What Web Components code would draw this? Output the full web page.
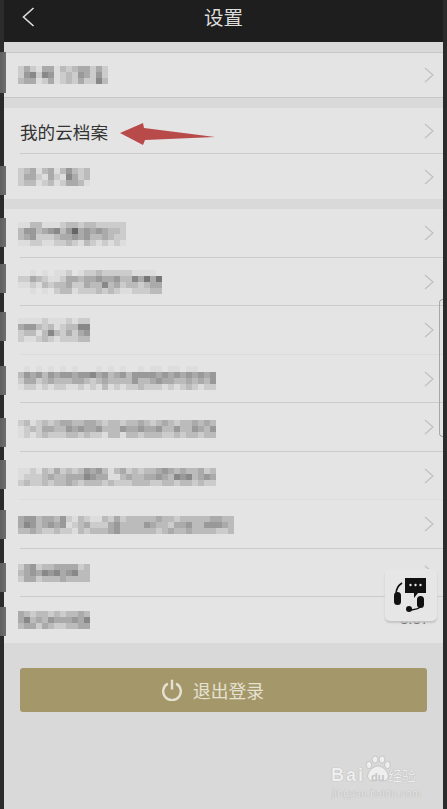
<!DOCTYPE html>
<html lang="zh">
<head>
<meta charset="utf-8">
<title>设置</title>
<style>
  html, body { margin: 0; background: #2b2b2b; }
  body { font-family: "Liberation Sans", "Noto Sans CJK SC", sans-serif; }
</style>
</head>
<body>
<settings-screen>
  <top-bar slot="bar">设置</top-bar>

  <row-group style="--row-h:44px" edged>
    <setting-row mosaic="0" top="13" tab-top="-1" tab-h="41" last></setting-row>
  </row-group>
  <row-group style="--row-h:46px">
    <setting-row><span>我的云档案</span><red-arrow></red-arrow></setting-row>
    <setting-row mosaic="1" top="14" tab-top="12" style="--row-h:45px" last></setting-row>
  </row-group>
  <row-group>
    <setting-row mosaic="2" top="13" tab-top="9"></setting-row>
    <setting-row mosaic="3" top="12" tab-top="6"></setting-row>
    <setting-row mosaic="4" top="12" tab-top="6" faint></setting-row>
    <setting-row mosaic="5" top="11" tab-top="11"></setting-row>
    <setting-row mosaic="6" top="17" tab-top="15"></setting-row>
    <setting-row mosaic="7" top="16" tab-top="8" faint></setting-row>
    <setting-row mosaic="8" top="16" tab-top="10"></setting-row>
    <setting-row mosaic="9" top="15" tab-top="14"></setting-row>
    <setting-row mosaic="10" top="14" tab-top="10" style="--row-h:46px" last no-chevron><span class="ver" slot="end">3.37</span></setting-row>
  </row-group>

  <logout-button>退出登录</logout-button>
  <help-widget></help-widget>
  <scroll-thumb></scroll-thumb>
  <baidu-mark></baidu-mark>
</settings-screen>

<script>
// blurred labels: one string per line, one hex digit per 6px cell (c => #ccc), dot = nothing
const MOSAICS = [
  ['cacdaadbcbaacac', 'c98c89dcbc9ac9c', 'baadcadcbcacc8b'],
  ['cbadbadb9bcb', 'caacdacd8acb', 'cbbdcbdcaabd'],
  ['ddbbdddcbbcbbccccc', 'b99ba98b96a9a9abbc', 'ba9cccbaa9a9bbabcc', 'ddccddccbcdbcdcdcd'],
  ['..d.d.ddc.dccbcccccdddd.', 'ccabcddcaabaa9aa9bb8a7a7', 'ddcdbcbbaccabb8bacbbcbaa', '..d.d.cbbdcccbcbcddcccbb'],
  ['ddddcdddcdcc', 'a99bcbdcbb88', 'cbbdb8bcaca9', 'cddcbcdcccbb'],
  ['.d.d.d.d.d...d.d.d..d.dd.dd.dd...', 'b9a9b9a99a998a9ba9b9999a9a9a9a9a9', 'caacbabbbaabcbabbbb9bba9aabbabab9', 'dccdcdccddcdcdbdcdccbcccdcdcbcdcc'],
  ['cbdcbcbaabbaabcbbcbbabcbabcbbabab', 'dcbcaabb9a9aa9bbb9aa9aa9bb9bb9ab9', 'dcdcbcccbbcbccdbbdbbcbbbccbcbbcbb'],
  ['ddcdbcacbcb9a9bdbacbcbba9ababbacb', 'dcccbabbaaa89aaddbabbaa9ab898ba9a', 'cbccbcbbabcbbbcbcccbbbccbbcbbcbcc'],
  ['a99baab9cdbcddbcacbbbbbabbcbbbbbaabb', 'a89ba9a9dcbaccca9bbbb9abbcaa9bb999ab', 'bbabccbccdbcbbba9bbbbbbcbabbabbbbccb'],
  ['ca9cbbaaaacb', 'ba9a898a98bb', 'caacbbbabbbb'],
  ['abcbbcbcbbab', 'a8bab9aaa9a8', 'baacabccbbaa']
];

class SettingsScreen extends HTMLElement {
  constructor() {
    super();
    this.attachShadow({ mode: 'open' }).innerHTML = `
      <style>
        :host { display: block; position: relative; margin: 0 4px; height: 809px; background: #d9d9d9; }
        .list { display: flex; flex-direction: column; gap: 10px; padding-top: 10px; }
      </style>
      <slot name="bar"></slot>
      <div class="list"><slot></slot></div>
    `;
  }
}

class TopBar extends HTMLElement {
  constructor() {
    super();
    this.attachShadow({ mode: 'open' }).innerHTML = `
      <style>
        :host { display: flex; align-items: center; justify-content: center; position: relative; height: 42px; box-sizing: border-box; padding-bottom: 9px; background: #1e1e1e; color: #dcdcdc; font-size: 19.5px; }
        svg { position: absolute; left: 17px; top: 6px; }
      </style>
      <svg width="20" height="22" viewBox="0 0 20 22"><path d="M12.5 2 L2.5 11 L12.5 20" fill="none" stroke="#dedede" stroke-width="1.6"/></svg>
      <slot></slot>
    `;
  }
}

class RowGroup extends HTMLElement {
  constructor() {
    super();
    this.attachShadow({ mode: 'open' }).innerHTML = `
      <style>
        :host { display: block; background: #e4e4e4; }
        :host([edged]) { border-top: 1px solid #c8c8c8; border-bottom: 1px solid #c8c8c8; }
      </style>
      <slot></slot>
    `;
  }
}

class SettingRow extends HTMLElement {
  constructor() {
    super();
    this.attachShadow({ mode: 'open' }).innerHTML = `
      <style>
        :host { display: flex; align-items: center; position: relative; height: var(--row-h, 48.5px); box-sizing: border-box; padding-left: 16px; color: #333; font-size: 17.6px; }
        :host::after { content: ""; position: absolute; left: 16px; right: 0; bottom: 0; height: 1px; background: #cbcbcb; }
        :host([faint])::after { background: #dcdcdc; }
        :host([last])::after { display: none; }
        :host([no-chevron]) .chev { display: none; }
        .chev { position: absolute; right: 9px; top: 50%; margin-top: -8px; }
        .mosaic { position: absolute; left: 14px; display: grid; grid-auto-rows: 6px; grid-auto-columns: 6px; }
        .tab { position: absolute; left: -4px; width: 6px; background: linear-gradient(90deg, #5f5f5f, #6e6e6e); }
        ::slotted(.ver) { position: absolute; left: 396px; top: 13px; font-size: 15px; line-height: 17px; color: #555; }
      </style>
      <slot></slot>
      <slot name="end"></slot>
      <svg class="chev" width="10" height="16" viewBox="0 0 10 16"><path d="M1 1 L9 8 L1 15" fill="none" stroke="#c0c0c0" stroke-width="1.2"/></svg>
    `;
  }
  connectedCallback() {
    if (!this.hasAttribute('mosaic')) return;
    const box = document.createElement('div');
    box.className = 'mosaic';
    box.style.top = this.getAttribute('top') + 'px';
    MOSAICS[+this.getAttribute('mosaic')].forEach((line, y) => {
      [...line].forEach((c, x) => {
        if (c === '.') return;
        const cell = document.createElement('i');
        cell.style.gridArea = `${y + 1} / ${x + 1}`;
        cell.style.background = '#' + c + c + c;
        box.append(cell);
      });
    });
    const tab = document.createElement('div');
    tab.className = 'tab';
    tab.style.top = this.getAttribute('tab-top') + 'px';
    tab.style.height = (this.getAttribute('tab-h') || 29) + 'px';
    this.shadowRoot.append(box, tab);
  }
}

class RedArrow extends HTMLElement {
  constructor() {
    super();
    this.attachShadow({ mode: 'open' }).innerHTML = `
      <style>:host { display: block; position: absolute; left: 116px; top: 13px; }</style>
      <svg width="98" height="26" viewBox="0 0 98 26" style="display:block"><path d="M0 12 L23 2 L24 7 L95 16 L25 19 L23 24 Z" fill="#b84a4a"/></svg>
    `;
  }
}

class LogoutButton extends HTMLElement {
  constructor() {
    super();
    this.attachShadow({ mode: 'open' }).innerHTML = `
      <style>
        :host { display: flex; align-items: center; justify-content: center; gap: 11px; height: 44px; box-sizing: border-box; padding-right: 21px; margin: 15px 16px 0; border-radius: 3px; background: #a4986b; color: #e6e2d2; font-size: 17.75px; }
      </style>
      <svg width="20" height="22" viewBox="0 0 20 22"><path d="M5.8 4.6 A8.8 8.8 0 1 0 14.2 4.6 M10 0.8 V10.5" fill="none" stroke="#e6e2d2" stroke-width="2.4"/></svg>
      <slot></slot>
    `;
  }
}

class HelpWidget extends HTMLElement {
  constructor() {
    super();
    this.attachShadow({ mode: 'open' }).innerHTML = `
      <style>
        :host { display: block; position: absolute; left: 381px; top: 569px; width: 52px; height: 52px; border-radius: 5px; background: #e6e6e6; box-shadow: 0 2px 2px #c4c4c4; }
        svg { position: absolute; left: 9px; top: 9px; }
      </style>
      <svg width="34" height="34" viewBox="0 0 34 34">
        <path d="M11 0 H32 V15 H24 L20 20 V15 H11 Z" fill="#111"/>
        <circle cx="16.5" cy="7" r="1.2" fill="#e6e6e6"/><circle cx="21.5" cy="7" r="1.2" fill="#e6e6e6"/><circle cx="26.5" cy="7" r="1.2" fill="#e6e6e6"/>
        <path d="M8 5 Q2 9 2 16" fill="none" stroke="#111" stroke-width="1.6"/>
        <rect x="0" y="14" width="7" height="13" rx="3.5" fill="#111"/>
        <rect x="23" y="18" width="7" height="12" rx="3.5" fill="#111"/>
        <path d="M26 29 Q25 31 17 32" fill="none" stroke="#111" stroke-width="1.6"/>
        <circle cx="15" cy="31" r="3" fill="#111"/>
      </svg>
    `;
  }
}

class ScrollThumb extends HTMLElement {
  constructor() {
    super();
    this.attachShadow({ mode: 'open' }).innerHTML = `
      <style>
        :host { display: block; position: absolute; left: 435px; top: 299px; width: 4px; height: 138px; box-sizing: border-box; border: 1.5px solid #a8a8a8; border-right: 0; border-radius: 4px 0 0 4px; }
      </style>
    `;
  }
}

class BaiduMark extends HTMLElement {
  constructor() {
    super();
    this.attachShadow({ mode: 'open' }).innerHTML = `
      <style>
        :host { display: block; position: absolute; left: 326px; top: 752px; width: 94px; height: 50px; color: #efefef; }
        div { position: absolute; white-space: nowrap; text-shadow: 0 0 1px #999; }
        .brand { top: 13px; left: 1px; font-size: 18px; line-height: 20px; font-weight: 700; letter-spacing: 2px; }
        .du { top: 19px; left: 41px; font-size: 11px; line-height: 12px; font-weight: 700; color: #c4c4c4; text-shadow: none; }
        .jy { top: 16px; left: 58px; font-size: 14px; line-height: 17px; }
        .url { top: 36px; left: 2px; font-size: 10.4px; line-height: 12px; letter-spacing: .3px; color: #e8e8e8; }
        svg { position: absolute; left: 35px; top: 3px; }
      </style>
      <div class="brand">Bai</div>
      <svg width="26" height="28" viewBox="0 0 26 28" fill="#efefef" stroke="#b4b4b4" stroke-width=".6"><ellipse cx="4" cy="10" rx="2.8" ry="3.6"/><ellipse cx="10" cy="4.5" rx="2.8" ry="3.6"/><ellipse cx="17" cy="4.5" rx="2.8" ry="3.6"/><ellipse cx="22.5" cy="10" rx="2.8" ry="3.6"/><path d="M13 11 C8 11 1 18 3 23 C5 27 9 26 13 25 C17 26 21 27 23 23 C25 18 18 11 13 11Z"/></svg>
      <div class="du">du</div>
      <div class="jy">经验</div>
      <div class="url">jingyan.baidu.com</div>
    `;
  }
}

customElements.define('settings-screen', SettingsScreen);
customElements.define('top-bar', TopBar);
customElements.define('row-group', RowGroup);
customElements.define('setting-row', SettingRow);
customElements.define('red-arrow', RedArrow);
customElements.define('logout-button', LogoutButton);
customElements.define('help-widget', HelpWidget);
customElements.define('scroll-thumb', ScrollThumb);
customElements.define('baidu-mark', BaiduMark);
</script>
</body>
</html>
